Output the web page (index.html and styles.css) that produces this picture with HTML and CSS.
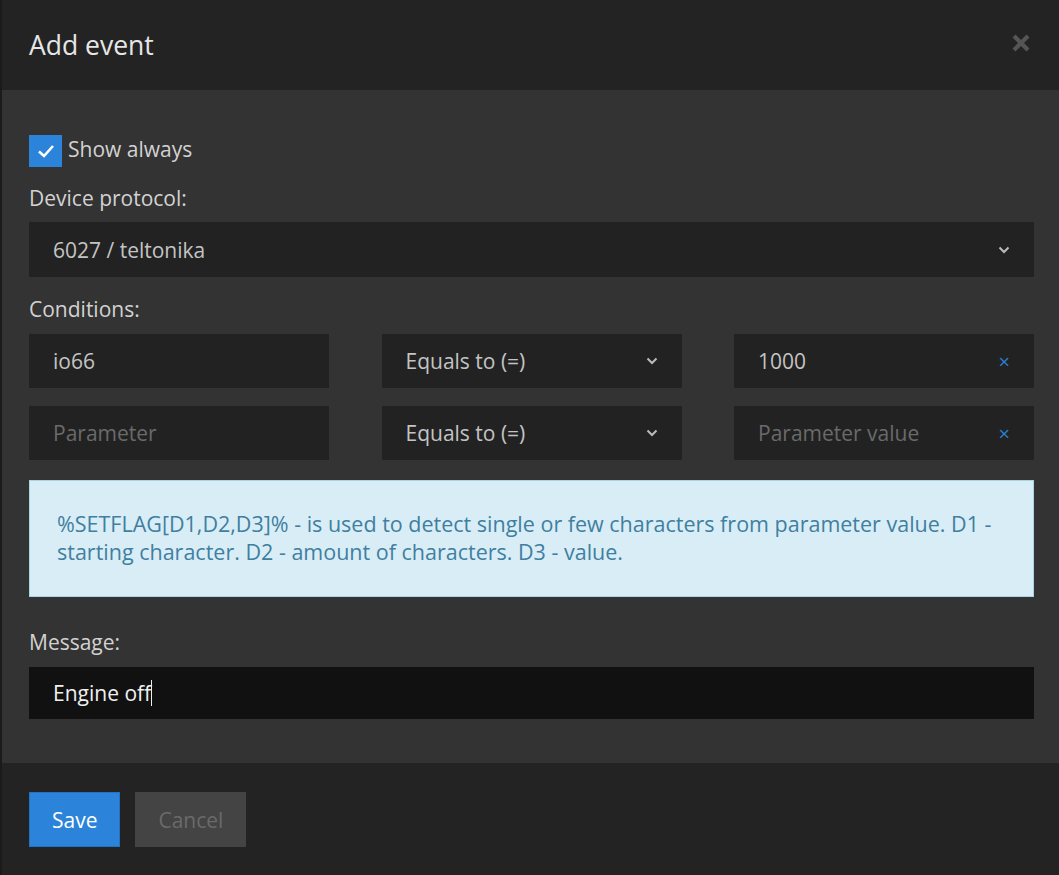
FILE: index.html
```html
<!DOCTYPE html>
<html lang="en">
<head>
  <meta charset="UTF-8" />
  <title>Add event</title>
  <link rel="stylesheet" href="styles.css">
</head>
<body>
  <div class="modal">
    <div class="modal-header">
      <h2>Add event</h2>
      <svg class="close" width="20" height="20" viewBox="0 0 20 20"><path d="M3 3 L17 17 M17 3 L3 17" stroke="#555" stroke-width="4.2"/></svg>
    </div>

    <div class="modal-body">
      <label class="check">
        <span class="box">
          <svg width="18" height="14" viewBox="0 0 18 14"><path d="M2 7.5 L7 12 L16 2" fill="none" stroke="#fff" stroke-width="2.6"/></svg>
        </span>
        <span class="check-text">Show always</span>
      </label>

      <div class="label">Device protocol:</div>
      <div class="field select">
        <span>6027 / teltonika</span>
        <svg class="chev" width="12" height="8" viewBox="0 0 12 8"><path d="M1.5 1.5 L6 6 L10.5 1.5" fill="none" stroke="#bbb" stroke-width="2"/></svg>
      </div>

      <div class="label label-cond">Conditions:</div>
      <div class="cond-row">
        <div class="field">io66</div>
        <div class="field select">
          <span>Equals to (=)</span>
          <svg class="chev" width="12" height="8" viewBox="0 0 12 8"><path d="M1.5 1.5 L6 6 L10.5 1.5" fill="none" stroke="#bbb" stroke-width="2"/></svg>
        </div>
        <div class="field select">
          <span>1000</span>
          <span class="remove">&times;</span>
        </div>
      </div>
      <div class="cond-row">
        <div class="field placeholder">Parameter</div>
        <div class="field select">
          <span>Equals to (=)</span>
          <svg class="chev" width="12" height="8" viewBox="0 0 12 8"><path d="M1.5 1.5 L6 6 L10.5 1.5" fill="none" stroke="#bbb" stroke-width="2"/></svg>
        </div>
        <div class="field select placeholder">
          <span>Parameter value</span>
          <span class="remove">&times;</span>
        </div>
      </div>

      <div class="info">
        %SETFLAG[D1,D2,D3]% - is used to detect single or few characters from parameter value. D1 - starting character. D2 - amount of characters. D3 - value.
      </div>

      <div class="label label-msg">Message:</div>
      <div class="field message">Engine off<span class="caret"></span></div>
    </div>

    <div class="modal-footer">
      <button class="btn btn-primary">Save</button>
      <button class="btn btn-default">Cancel</button>
    </div>
  </div>
</body>
</html>
```

FILE: styles.css
```css
body {
  margin: 0;
  background: #1b1b1b;
  font-family: "Open Sans", "Noto Sans", sans-serif;
  overflow: hidden;
}

.modal {
  margin-left: 2px;
  background: #333;
  height: 875px;
}

/* Header */
.modal-header {
  display: flex;
  align-items: center;
  justify-content: space-between;
  height: 90px;
  padding: 0 28px 0 27px;
  background: #232323;
}

.modal-header h2 {
  margin: 0;
  font-size: 26.5px;
  font-weight: 400;
  color: #e6e6e6;
  padding-top: 1px;
  padding-bottom: 2px;
}

.close {
  margin-bottom: 4px;
}

/* Body */
.modal-body {
  padding: 44px 25px 44px 27px;
}

.check {
  display: flex;
  align-items: center;
  gap: 6px;
  font-size: 21px;
  color: #d2d2d2;
  height: 32px;
  line-height: 26px;
}

.check .box {
  width: 33px;
  height: 32px;
  background: #2b84d9;
  display: flex;
  align-items: center;
  justify-content: center;
  margin-top: 2px;
}

.check-text {
  margin-top: -2px;
}

.label {
  font-size: 21px;
  color: #d2d2d2;
  line-height: 26px;
  margin: 19px 0 11px 0;
}

.label-cond {
  margin-bottom: 12px;
}

.label-msg {
  margin-bottom: 12px;
}

.field {
  display: flex;
  align-items: center;
  justify-content: space-between;
  box-sizing: border-box;
  height: 55px;
  padding: 0 24px;
  background: #222;
  color: #c4c4c4;
  font-size: 21px;
}

.field.placeholder {
  color: #6a6a6a;
}

.cond-row {
  display: grid;
  grid-template-columns: 300px 300px 300px;
  justify-content: space-between;
  margin-bottom: 18px;
}

.cond-row .field {
  height: 54px;
}

.remove {
  color: #2c7ccc;
  font-size: 20px;
}

.info {
  margin: 20px 0 32px 0;
  padding: 29px 27px 30px 27px;
  background: #d9edf7;
  border: 1px solid #a9d4e2;
  color: #3f7f9f;
  font-size: 21.5px;
  line-height: 28px;
}

.message {
  background: #111;
  color: #f0f0f0;
  height: 52px;
  justify-content: flex-start;
}

.caret {
  display: inline-block;
  width: 1px;
  height: 26px;
  background: #eee;
}

/* Footer */
.modal-footer {
  display: flex;
  gap: 15px;
  background: #232323;
  padding: 29px 27px;
  height: 112px;
  box-sizing: border-box;
}

.btn {
  height: 55px;
  border: none;
  font-family: "Open Sans", "Noto Sans", sans-serif;
  font-size: 21px;
  padding: 0 22px;
}

.btn-primary {
  background: #2b84d9;
  color: #fff;
  border: 1px solid #2274c2;
}

.btn-default {
  background: #444;
  color: #6a6a6a;
  padding: 0 23px;
}
```
